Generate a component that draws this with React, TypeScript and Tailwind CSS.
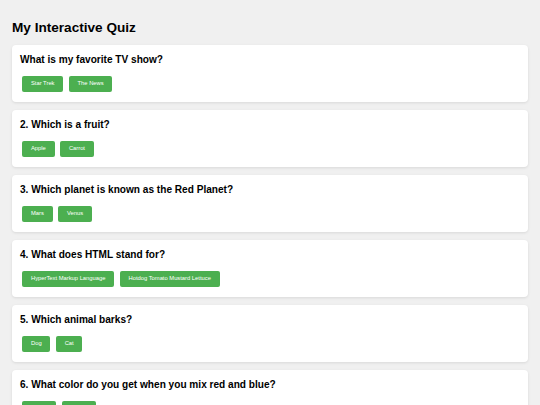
const questions = [
  { q: 'What is my favorite TV show?', options: ['Star Trek', 'The News'] },
  { q: '2. Which is a fruit?', options: ['Apple', 'Carrot'] },
  { q: '3. Which planet is known as the Red Planet?', options: ['Mars', 'Venus'] },
  { q: '4. What does HTML stand for?', options: ['HyperText Markup Language', 'Hotdog Tomato Mustard Lettuce'] },
  { q: '5. Which animal barks?', options: ['Dog', 'Cat'] },
  { q: '6. What color do you get when you mix red and blue?', options: ['Purple', 'Green'] },
];

export default function App() {
  return (
    <div className="min-h-screen bg-[#f0f0f0] px-[12px] pt-[20px] pb-[12px] font-['Liberation_Sans',Arial,sans-serif] text-black">
      <h1 className="text-[13.6px] font-bold leading-[15px] mb-[10px]">My Interactive Quiz</h1>

      <div className="flex flex-col gap-[8px]">
        {questions.map((item, i) => (
          <div
            key={i}
            className="bg-white rounded-[4px] shadow-[0_1px_3px_rgba(0,0,0,0.1)] px-[8px] pt-[9px] pb-[7.5px]"
          >
            <h2 className="text-[10.1px] font-bold leading-[11px] mb-[8px]">{item.q}</h2>
            <div className="flex gap-[5.7px] pl-[2.3px] py-[3px]">
              {item.options.map((opt) => (
                <button
                  key={opt}
                  className="h-[15.5px] px-[8.7px] flex items-center bg-[#4caf50] text-white text-[5.8px] leading-none rounded-[2px]"
                >
                  {opt}
                </button>
              ))}
            </div>
          </div>
        ))}
      </div>
    </div>
  );
}
